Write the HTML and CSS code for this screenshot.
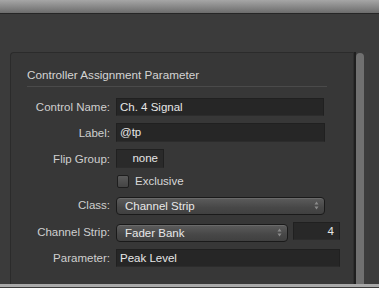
FILE: index.html
```html
<!DOCTYPE html>
<html>
<head>
<meta charset="utf-8">
<link rel="stylesheet" href="styles.css">
</head>
<body>
<div class="topbar"></div>
<div class="stage">
  <div class="panel">
    <div class="title">Controller Assignment Parameter</div>
    <div class="form">
      <div class="lbl">Control Name:</div>
      <div class="field w208">Ch. 4 Signal</div>

      <div class="lbl">Label:</div>
      <div class="field w209">@tp</div>

      <div class="lbl">Flip Group:</div>
      <div class="field small">none</div>

      <div class="lbl"></div>
      <label class="check"><span class="box"></span>Exclusive</label>

      <div class="lbl">Class:</div>
      <div class="popup w209">Channel Strip<span class="arrows"><svg width="5" height="9" viewBox="0 0 5 9"><path d="M2.5 0.5 L4.5 3.5 L0.5 3.5 Z M2.5 8.5 L4.5 5.5 L0.5 5.5 Z" fill="#8a8a8a"/></svg></span></div>

      <div class="lbl">Channel Strip:</div>
      <div class="pair">
        <div class="popup w172">Fader Bank<span class="arrows"><svg width="5" height="9" viewBox="0 0 5 9"><path d="M2.5 0.5 L4.5 3.5 L0.5 3.5 Z M2.5 8.5 L4.5 5.5 L0.5 5.5 Z" fill="#8a8a8a"/></svg></span></div>
        <div class="field num">4</div>
      </div>

      <div class="lbl">Parameter:</div>
      <div class="field w224">Peak Level</div>
    </div>
  </div>
  <div class="sep"></div>
  <div class="track"><div class="thumb"></div></div>
</div>
<div class="bottom"></div>
</body>
</html>
```
FILE: styles.css
```css
html, body {
  margin: 0;
  padding: 0;
  width: 379px;
  height: 288px;
  overflow: hidden;
  background: #3b3b3b;
  font-family: "Liberation Sans", Arial, sans-serif;
  font-size: 11px;
}
.topbar {
  height: 13px;
  background: linear-gradient(#a6a6a6, #6c6c6c);
  border-bottom: 1px solid #262626;
}
.stage {
  display: flex;
  height: 232px;
  margin-top: 38px;
  padding-left: 10px;
}
.panel {
  width: 343px;
  background: #373737;
  border-top: 1px solid #2b2b2b;
  border-left: 1px solid #2b2b2b;
  border-top-left-radius: 4px;
  padding: 15px 26px 0 16px;
  box-sizing: border-box;
}
.title {
  color: #d4d4d4;
  font-size: 11.7px;
  line-height: 14px;
  padding-bottom: 4px;
  border-bottom: 1px solid #4a4a4a;
}
.form {
  display: grid;
  grid-template-columns: 83px auto;
  column-gap: 6px;
  row-gap: 7px;
  margin-top: 11px;
  align-items: center;
  justify-items: start;
}
.lbl {
  justify-self: end;
  color: #cfcfcf;
  font-size: 11.5px;
  text-align: right;
}
.field {
  height: 18px;
  box-sizing: border-box;
  background: #262626;
  border: 1px solid #202020;
  border-bottom-color: #2c2c2c;
  color: #e6e6e6;
  font-size: 11.5px;
  line-height: 16px;
  padding-left: 3px;
}
.w208 { width: 208px; }
.w209 { width: 209px; height: 19px; }
.w224 { width: 224px; }
.field.small {
  width: 48px;
  height: 19px;
  text-align: right;
  padding-right: 5px;
  padding-left: 0;
  background: #2a2a2a;
}
.check {
  display: flex;
  align-items: center;
  color: #d8d8d8;
  font-size: 11.5px;
  height: 14px;
  margin-top: -1px;
}
.box {
  width: 10px;
  height: 11px;
  margin-left: 1px;
  margin-right: 6px;
  border: 1px solid #1e1e1e;
  border-radius: 2px;
  background: linear-gradient(#5a5a5a, #444);
}
.popup {
  position: relative;
  height: 18px;
  box-sizing: border-box;
  border: 1px solid #1a1a1a;
  border-radius: 4px;
  background: linear-gradient(#5c5c5c, #474747 60%, #404040);
  box-shadow: inset 0 1px 0 #6a6a6a;
  color: #e8e8e8;
  font-size: 11.5px;
  line-height: 16px;
  padding-left: 8px;
  margin-top: 2px;
}
.w172 { width: 172px; margin-top: 2px; }
.arrows {
  position: absolute;
  right: 5px;
  top: 3px;
  display: flex;
}
.pair {
  display: flex;
  align-items: center;
  gap: 5px;
}
.field.num {
  width: 47px;
  text-align: right;
  padding-right: 5px;
  margin-top: -2px;
  background: #282828;
}
.sep {
  width: 2px;
  background: #1f1f1f;
  border-left: 1px solid #2e2e2e;
}
.track {
  width: 13px;
  display: flex;
  justify-content: flex-start;
  padding-top: 1px;
  background: #3c3c3c;
}
.thumb {
  width: 8px;
  height: 100%;
  background: #707070;
  border-top-left-radius: 4px;
  border-top-right-radius: 4px;
}
.bottom {
  height: 3px;
  background: #a9a9a9;
}
```
